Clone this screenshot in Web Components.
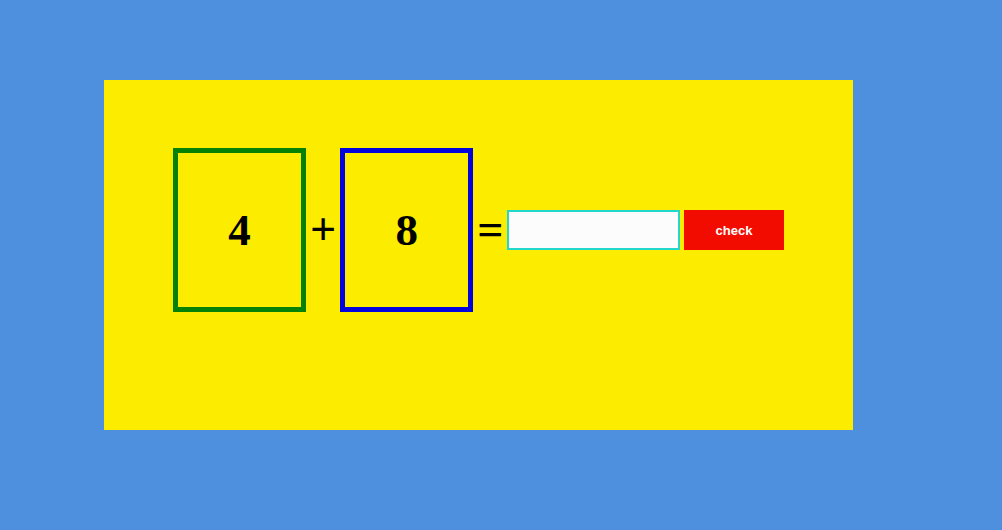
<!DOCTYPE html>
<html lang="en">
<head>
<meta charset="utf-8">
<meta name="viewport" content="width=device-width, initial-scale=1">
<title>Addition quiz</title>
<style>
body { margin: 0; min-height: 100vh; background: #4e90dd; font-family: "Liberation Serif", serif; color: #000; }
</style>
</head>
<body>
<quiz-board>
  <number-card color="#058205">4</number-card>
  <math-sign>+</math-sign>
  <number-card color="#0303dc">8</number-card>
  <math-sign>=</math-sign>
  <answer-form></answer-form>
</quiz-board>
<script>
class BaseElement extends HTMLElement {
  constructor() {
    super();
    this.attachShadow({ mode: "open" }).innerHTML = this.constructor.markup;
  }
}

class QuizBoard extends BaseElement {
  static markup = `
    <style>
      :host { display: block; padding: 80px 149px 100px 104px; }
      main { box-sizing: border-box; min-height: 350px; padding: 68px 69px; background: #fcec00; }
      .row { display: flex; align-items: center; gap: 4px; }
    </style>
    <main><div class="row"><slot></slot></div></main>`;
}

class NumberCard extends BaseElement {
  static markup = `
    <style>
      :host { display: block; flex: none; }
      div { box-sizing: border-box; width: 133px; height: 164px; display: grid; place-items: center;
        border: 5px solid var(--card-color); font-size: 45px; line-height: 52px; font-weight: bold; }
    </style>
    <div><span><slot></slot></span></div>`;
  connectedCallback() {
    this.style.setProperty("--card-color", this.getAttribute("color"));
  }
}

class MathSign extends BaseElement {
  static markup = `
    <style>
      :host { display: block; flex: none; font-size: 46px; line-height: 52px; font-weight: bold; }
    </style>
    <slot></slot>`;
}

class AnswerForm extends BaseElement {
  static markup = `
    <style>
      :host { display: block; flex: 1; min-width: 0; }
      form { display: flex; gap: 4px; margin: 0; }
      input, button { box-sizing: border-box; height: 40px; margin: 0; border-radius: 0; }
      input { flex: 1; min-width: 0; padding: 0 8px; border: 2px solid #22d8cc; background: #fcfcfc;
        font: 16px "Liberation Sans", sans-serif; outline: none; }
      button { flex: none; width: 100px; padding: 0; border: 0; background: #f20c00; color: #fff;
        font: bold 13px "Liberation Sans", sans-serif; }
    </style>
    <form>
      <input type="text" aria-label="Answer" autocomplete="off">
      <button type="submit">check</button>
    </form>`;
  connectedCallback() {
    this.shadowRoot.querySelector("form").addEventListener("submit", e => e.preventDefault());
  }
}

customElements.define("quiz-board", QuizBoard);
customElements.define("number-card", NumberCard);
customElements.define("math-sign", MathSign);
customElements.define("answer-form", AnswerForm);
</script>
</body>
</html>
